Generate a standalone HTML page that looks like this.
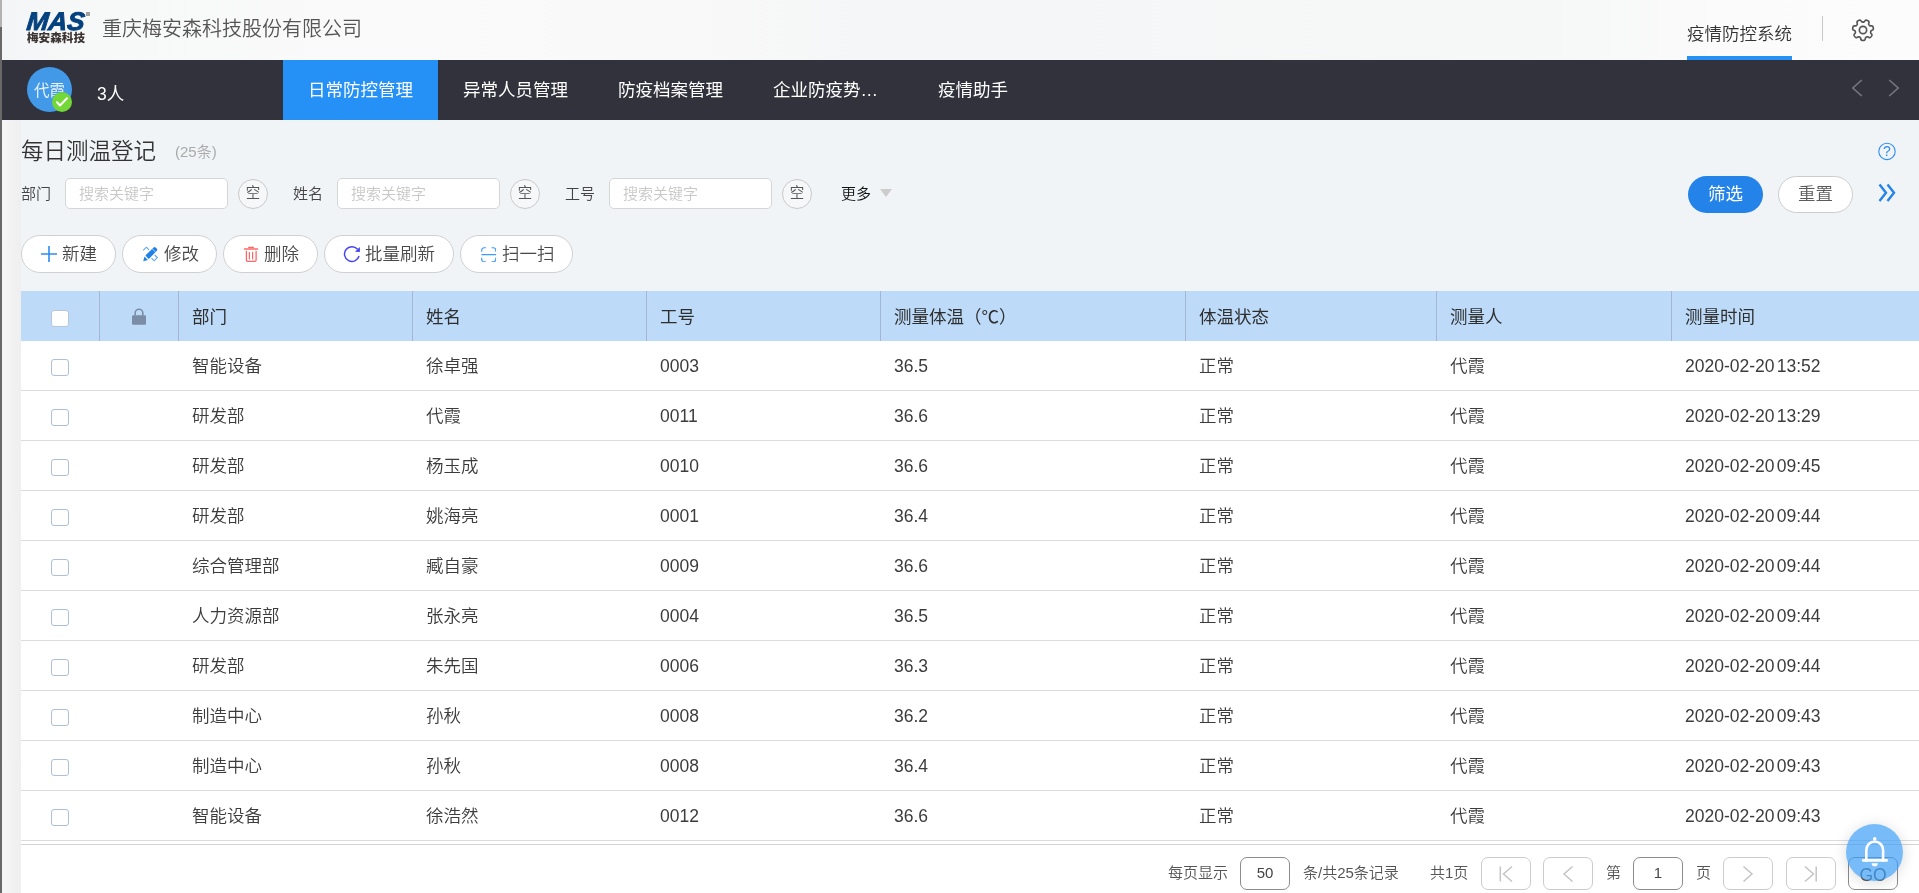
<!DOCTYPE html>
<html lang="zh-CN">
<head>
<meta charset="utf-8">
<title>每日测温登记</title>
<style>
*{box-sizing:border-box;margin:0;padding:0}
html,body{width:1919px;height:893px;overflow:hidden}
body{position:relative;background:#f0f4f7;font-family:"Liberation Sans","Noto Sans CJK SC",sans-serif;color:#444;font-size:17.5px}
#app{position:absolute;left:0;top:0;width:1919px;height:893px;will-change:transform;font-weight:350}
.abs{position:absolute}
.t{position:absolute;white-space:nowrap;line-height:1}
/* left window edge */
#edge1{left:0;top:0;width:2px;height:27px;background:#b2b2b2}
#edge2{left:0;top:27px;width:2px;height:866px;background:#686868}
#gutter{left:2px;top:120px;width:19px;height:773px;background:linear-gradient(90deg,#f5f5f5,#efeff0)}
/* header */
#hdr{left:2px;top:0;width:1917px;height:60px;background:linear-gradient(90deg,#f4f5f6 0,#f7f8f8 5%,#fafafa 20%,#f9f9f9 35%,#f5f6f7 45%,#f6f7f7 80%,#fbfbfb 90%,#fcfcfc 100%)}
#nav{left:2px;top:60px;width:1917px;height:60px;background:#32323c}
#tabA{left:283px;top:60px;width:155px;height:60px;background:#2590f5}
.tab{top:61px;height:60px;line-height:59px;color:#fff;font-size:17.5px;font-weight:400}
/* filter */
.lbl{font-size:15px;color:#444;top:186px}
.inp{top:178px;width:163px;height:31px;background:#fff;border:1px solid #d6d6d6;border-radius:5px}
.ph{font-size:15px;color:#c8c8c8;top:186px}
.kong{top:179px;width:30px;height:30px;border:1px solid #c8c8c8;border-radius:50%;background:#f6f7f8;text-align:center;line-height:27.5px;font-size:14.5px;color:#555}
/* buttons */
.btn{top:235px;height:38px;border:1px solid #d0d0d0;border-radius:19px;background:#fff}
.bt{top:246.3px;font-size:17.5px;color:#484848}
/* table */
#thead{left:21px;top:291px;width:1898px;height:50px;background:#bddbf9}
.vd{top:291px;width:1px;height:50px;background:#a3b6d6}
.th{top:309.3px;font-size:17.5px;color:#2e2e2e;font-weight:400}
#tbody{left:21px;top:341px;width:1898px;height:552px;background:#fff}
.row{position:absolute;left:21px;width:1898px;height:50px;border-bottom:1px solid #dcdcdc}
.row span{position:absolute;top:17px;line-height:1;white-space:nowrap;font-size:17.5px;color:#3c3c3c}
.cb{position:absolute;left:30px;top:18px;width:17.5px;height:17px;border:1px solid #aebfd8;border-radius:3px;background:#fff}
.c1{left:171px}.c2{left:405px}.c3{left:639px}.c4{left:873px}.c5{left:1178px}.c6{left:1429px}.c7{left:1664px;word-spacing:-2.6px}
/* pager */
.pg{font-size:15px;color:#555;top:865px}
.pb{top:857px;width:50px;height:33px;border:1px solid #ccc;border-radius:7px;background:#fff}
.pi{top:857px;width:50px;height:33px;border:1px solid #8c8c8c;border-radius:7px;background:#fff;text-align:center;line-height:30px;font-size:15px;color:#444}
</style>
</head>
<body>
<div id="app">
<div class="abs" id="hdr"></div>
<div class="abs" id="nav"></div>

<!-- logo -->
<svg class="abs" style="left:24px;top:6px" width="72" height="42" viewBox="0 0 72 42">
  <text x="4.500" y="24.4" transform="skewX(-6)" font-family="Liberation Sans, sans-serif" font-weight="bold" font-style="italic" font-size="25.5" fill="#04417f" stroke="#04417f" stroke-width="0.9" textLength="58" lengthAdjust="spacingAndGlyphs">MAS</text>
  <rect x="62" y="6" width="4" height="4" fill="#a0a0a0"/>
  <text x="3" y="36.3" font-family="Noto Sans CJK SC, sans-serif" font-weight="900" font-size="11.6" fill="#3c3333" textLength="58" lengthAdjust="spacingAndGlyphs">梅安森科技</text>
</svg>
<div class="t" style="left:102px;top:18.700px;font-size:20px;color:#555">重庆梅安森科技股份有限公司</div>
<div class="t" style="left:1687px;top:25.5px;font-size:17.5px;color:#333">疫情防控系统</div>
<div class="abs" style="left:1687px;top:56px;width:105px;height:4px;background:#2590f5"></div>
<div class="abs" style="left:1822px;top:16px;width:1px;height:25px;background:#c9c9c9"></div>
<svg class="abs" style="left:1851px;top:17.900px" width="24" height="24" viewBox="0 0 24 24" fill="none" stroke="#555" stroke-width="1.650" stroke-linejoin="round">
  <circle cx="12" cy="12" r="3.650"/>
  <path d="M21.57 12.00 L20.83 12.33 L20.28 12.62 L19.99 12.90 L19.85 13.18 L19.77 13.47 L19.70 13.76 L19.63 14.05 L19.59 14.34 L19.59 14.66 L19.72 15.03 L20.10 15.54 L20.62 16.15 L20.92 16.72 L20.94 17.16 L20.81 17.54 L20.62 17.88 L20.41 18.20 L20.17 18.52 L19.92 18.81 L19.65 19.10 L19.36 19.36 L19.02 19.57 L18.58 19.65 L17.97 19.48 L17.25 19.11 L16.67 18.86 L16.28 18.81 L15.97 18.88 L15.69 18.99 L15.43 19.11 L15.16 19.24 L14.90 19.39 L14.66 19.59 L14.45 19.93 L14.29 20.54 L14.13 21.33 L13.88 21.92 L13.54 22.21 L13.17 22.34 L12.78 22.41 L12.39 22.44 L12.00 22.45 L11.61 22.44 L11.22 22.41 L10.83 22.34 L10.46 22.21 L10.12 21.92 L9.87 21.33 L9.71 20.54 L9.55 19.93 L9.34 19.59 L9.10 19.39 L8.84 19.24 L8.57 19.11 L8.31 18.99 L8.03 18.88 L7.72 18.81 L7.33 18.86 L6.75 19.11 L6.03 19.48 L5.42 19.65 L4.98 19.57 L4.64 19.36 L4.35 19.10 L4.08 18.81 L3.83 18.52 L3.59 18.20 L3.38 17.88 L3.19 17.54 L3.06 17.16 L3.08 16.72 L3.38 16.15 L3.90 15.54 L4.28 15.03 L4.41 14.66 L4.41 14.34 L4.37 14.05 L4.30 13.76 L4.23 13.47 L4.15 13.18 L4.01 12.90 L3.72 12.62 L3.17 12.33 L2.43 12.00 L1.91 11.62 L1.70 11.23 L1.66 10.83 L1.68 10.44 L1.73 10.06 L1.81 9.67 L1.91 9.30 L2.03 8.92 L2.18 8.56 L2.39 8.23 L2.75 7.96 L3.38 7.85 L4.18 7.87 L4.81 7.85 L5.19 7.72 L5.44 7.53 L5.64 7.31 L5.83 7.08 L6.01 6.84 L6.18 6.60 L6.31 6.31 L6.36 5.92 L6.23 5.30 L6.03 4.52 L6.01 3.88 L6.18 3.47 L6.46 3.19 L6.78 2.96 L7.12 2.76 L7.47 2.58 L7.82 2.42 L8.19 2.28 L8.56 2.18 L8.96 2.13 L9.39 2.25 L9.87 2.67 L10.36 3.31 L10.76 3.79 L11.10 4.01 L11.41 4.08 L11.70 4.10 L12.00 4.11 L12.30 4.10 L12.59 4.08 L12.90 4.01 L13.24 3.79 L13.64 3.31 L14.13 2.67 L14.61 2.25 L15.04 2.13 L15.44 2.18 L15.81 2.28 L16.18 2.42 L16.53 2.58 L16.88 2.76 L17.22 2.96 L17.54 3.19 L17.82 3.47 L17.99 3.88 L17.97 4.52 L17.77 5.30 L17.64 5.92 L17.69 6.31 L17.82 6.60 L17.99 6.84 L18.17 7.08 L18.36 7.31 L18.56 7.53 L18.81 7.72 L19.19 7.85 L19.82 7.87 L20.62 7.85 L21.25 7.96 L21.61 8.23 L21.82 8.56 L21.97 8.92 L22.09 9.30 L22.19 9.67 L22.27 10.06 L22.32 10.44 L22.34 10.83 L22.30 11.23 L22.09 11.62Z"/>
</svg>
<!-- nav -->
<div class="abs" style="left:27px;top:67px;width:45px;height:45px;border-radius:50%;background:#4199e8"></div>
<div class="t" style="left:34px;top:83.2px;font-size:15.5px;color:#eaf3fc;font-weight:400">代霞</div>
<div class="abs" style="left:52px;top:92px;width:20px;height:20px;border-radius:50%;background:#72d737"></div>
<svg class="abs" style="left:52px;top:92px" width="20" height="20" viewBox="0 0 20 20" fill="none" stroke="#fff" stroke-width="2" stroke-linecap="round" stroke-linejoin="round"><path d="M5 10.3l3 3.2 7-7.2"/></svg>
<div class="t" style="left:97px;top:86px;font-size:17.5px;color:#fff;font-weight:400">3人</div>
<div class="abs" id="tabA"></div>
<div class="t tab" style="left:308px">日常防控管理</div>
<div class="t tab" style="left:463px">异常人员管理</div>
<div class="t tab" style="left:618px">防疫档案管理</div>
<div class="t tab" style="left:773px">企业防疫势…</div>
<div class="t tab" style="left:938px">疫情助手</div>
<svg class="abs" style="left:1848px;top:76px" width="56" height="24" viewBox="0 0 56 24" fill="none" stroke="#77777f" stroke-width="1.6"><path d="M13.800 4L4.800 12 13.800 20"/><path d="M41.200 4L50.200 12 41.200 20"/></svg>

<!-- title + filter -->
<div class="t" style="left:21px;top:141.300px;font-size:22.5px;color:#333">每日测温登记</div>
<div class="t" style="left:175px;top:144px;font-size:15px;color:#aaa">(25条)</div>
<svg class="abs" style="left:1877px;top:141px" width="20" height="20" viewBox="0 0 20 20"><circle cx="10" cy="10.4" r="8.2" fill="none" stroke="#2f8df0" stroke-width="1.1"/><text x="10" y="15.300" text-anchor="middle" font-family="Liberation Sans, sans-serif" font-size="14" fill="#2f8df0">?</text></svg>
<div class="t lbl" style="left:21px">部门</div>
<div class="abs inp" style="left:65px"></div><div class="t ph" style="left:79px">搜索关键字</div>
<div class="abs kong" style="left:238px">空</div>
<div class="t lbl" style="left:293px">姓名</div>
<div class="abs inp" style="left:337px"></div><div class="t ph" style="left:351px">搜索关键字</div>
<div class="abs kong" style="left:510px">空</div>
<div class="t lbl" style="left:565px">工号</div>
<div class="abs inp" style="left:609px"></div><div class="t ph" style="left:623px">搜索关键字</div>
<div class="abs kong" style="left:782px">空</div>
<div class="t lbl" style="left:841px;color:#111">更多</div>
<div class="abs" style="left:880px;top:189px;width:0;height:0;border-left:6.5px solid transparent;border-right:6.5px solid transparent;border-top:8.5px solid #ccc"></div>
<div class="abs" style="left:1688px;top:176px;width:75px;height:37px;border-radius:19px;background:#2383e8"></div>
<div class="t" style="left:1708px;top:186px;font-size:17.5px;color:#fff;font-weight:400">筛选</div>
<div class="abs" style="left:1778px;top:176px;width:75px;height:37px;border-radius:19px;background:#fff;border:1px solid #ccc"></div>
<div class="t" style="left:1798px;top:186px;font-size:17.5px;color:#5c5c5c">重置</div>
<svg class="abs" style="left:1876px;top:182px" width="22" height="22" viewBox="0 0 22 22" fill="none" stroke="#2383e8" stroke-width="2.400"><path d="M3.5 2.5l6.5 8.3-6.5 8.2"/><path d="M11.5 2.5l6.5 8.3-6.5 8.2"/></svg>
<!-- toolbar -->
<div class="abs btn" style="left:21px;width:95px"></div>
<svg class="abs" style="left:41px;top:246px" width="16" height="16" viewBox="0 0 16 16" stroke="#2e8bf0" stroke-width="1.6"><path d="M8 0v16M0 8h16"/></svg>
<div class="t bt" style="left:62px">新建</div>
<div class="abs btn" style="left:122px;width:95px"></div>
<svg class="abs" style="left:141px;top:245px" width="18" height="18" viewBox="0 0 18 18"><path d="M2.2 16.2l1.3-4.6 3.4 3.4z" fill="#1f80e8"/><path d="M4.4 10.6L12.6 2.4a1.4 1.4 0 0 1 2 0l1.3 1.3a1.4 1.4 0 0 1 0 2L7.8 13.900z" fill="#1f80e8"/><path d="M11 3.600l3.400 3.400" stroke="#cfe4fb" stroke-width=".8" fill="none"/><path d="M2.2 5.4L5.4 2.2 8 4.8M10.5 13.2l2.6 2.6 3.2-3.2-2.6-2.6" fill="none" stroke="#5aa6f5" stroke-width="1.1"/></svg>
<div class="t bt" style="left:164px">修改</div>
<div class="abs btn" style="left:223px;width:95px"></div>
<svg class="abs" style="left:243px;top:246px" width="16" height="17" viewBox="0 0 16 17" fill="none" stroke="#ff6666" stroke-linecap="round"><path d="M1.500 3.100H14.500" stroke-width="1.500"/><path d="M5.600 1.400H10.400" stroke-width="1.100"/><path d="M3.400 5.300V14a1.400 1.400 0 0 0 1.400 1.400H11.700a1.400 1.400 0 0 0 1.400-1.400V5.300" stroke-width="1.300"/><path d="M6.400 6.400V13M9.600 6.400V13" stroke-width="1.200"/></svg>
<div class="t bt" style="left:264px">删除</div>
<div class="abs btn" style="left:324px;width:130px"></div>
<svg class="abs" style="left:343px;top:245px" width="18" height="18" viewBox="0 0 18 18" fill="none" stroke="#4444f2" stroke-width="1.450"><path d="M16.050 11A7.400 7.400 0 1 1 14.570 4.340"/><path d="M16.900 1.900V6.900L12 6.700z" fill="#4444f2" stroke="none"/></svg>
<div class="t bt" style="left:365px">批量刷新</div>
<div class="abs btn" style="left:460px;width:113px"></div>
<svg class="abs" style="left:480.5px;top:246.700px" width="15.5" height="15.5" viewBox="0 0 17 17" fill="none" stroke="#3b9bff" stroke-width="1.300"><path d="M0.8 5.2V3.4A2.6 2.6 0 0 1 3.4 0.8h2M11.6 0.8h2a2.6 2.6 0 0 1 2.6 2.6v1.8M16.2 11.8v1.8a2.6 2.6 0 0 1-2.6 2.6h-2M5.4 16.2h-2a2.6 2.6 0 0 1-2.6-2.6v-1.8M0.5 8.4h16"/></svg>
<div class="t bt" style="left:502px">扫一扫</div>

<!-- table -->
<div class="abs" id="tbody"></div>
<div class="abs" id="thead"></div>
<div class="abs vd" style="left:99px"></div><div class="abs vd" style="left:178px"></div><div class="abs vd" style="left:412px"></div><div class="abs vd" style="left:646px"></div><div class="abs vd" style="left:880px"></div><div class="abs vd" style="left:1185px"></div><div class="abs vd" style="left:1436px"></div><div class="abs vd" style="left:1671px"></div>
<div class="abs" style="left:51px;top:309.5px;width:17.5px;height:17.5px;border:1px solid #b5c6dc;border-radius:3px;background:#fff"></div>
<svg class="abs" style="left:131px;top:308px" width="16" height="18" viewBox="0 0 16 18"><rect x="1" y="7.2" width="14" height="9.6" rx="1.2" fill="#7b8ca6"/><path d="M4.2 7.5V5a3.8 3.8 0 0 1 7.6 0v2.5" fill="none" stroke="#7b8ca6" stroke-width="1.6"/></svg>
<div class="t th" style="left:192px">部门</div><div class="t th" style="left:426px">姓名</div><div class="t th" style="left:660px">工号</div><div class="t th" style="left:894px">测量体温（℃）</div><div class="t th" style="left:1199px">体温状态</div><div class="t th" style="left:1450px">测量人</div><div class="t th" style="left:1685px">测量时间</div>
<div class="row" style="top:341px"><i class="cb"></i><span class="c1">智能设备</span><span class="c2">徐卓强</span><span class="c3">0003</span><span class="c4">36.5</span><span class="c5">正常</span><span class="c6">代霞</span><span class="c7">2020-02-20 13:52</span></div>
<div class="row" style="top:391px"><i class="cb"></i><span class="c1">研发部</span><span class="c2">代霞</span><span class="c3">0011</span><span class="c4">36.6</span><span class="c5">正常</span><span class="c6">代霞</span><span class="c7">2020-02-20 13:29</span></div>
<div class="row" style="top:441px"><i class="cb"></i><span class="c1">研发部</span><span class="c2">杨玉成</span><span class="c3">0010</span><span class="c4">36.6</span><span class="c5">正常</span><span class="c6">代霞</span><span class="c7">2020-02-20 09:45</span></div>
<div class="row" style="top:491px"><i class="cb"></i><span class="c1">研发部</span><span class="c2">姚海亮</span><span class="c3">0001</span><span class="c4">36.4</span><span class="c5">正常</span><span class="c6">代霞</span><span class="c7">2020-02-20 09:44</span></div>
<div class="row" style="top:541px"><i class="cb"></i><span class="c1">综合管理部</span><span class="c2">臧自豪</span><span class="c3">0009</span><span class="c4">36.6</span><span class="c5">正常</span><span class="c6">代霞</span><span class="c7">2020-02-20 09:44</span></div>
<div class="row" style="top:591px"><i class="cb"></i><span class="c1">人力资源部</span><span class="c2">张永亮</span><span class="c3">0004</span><span class="c4">36.5</span><span class="c5">正常</span><span class="c6">代霞</span><span class="c7">2020-02-20 09:44</span></div>
<div class="row" style="top:641px"><i class="cb"></i><span class="c1">研发部</span><span class="c2">朱先国</span><span class="c3">0006</span><span class="c4">36.3</span><span class="c5">正常</span><span class="c6">代霞</span><span class="c7">2020-02-20 09:44</span></div>
<div class="row" style="top:691px"><i class="cb"></i><span class="c1">制造中心</span><span class="c2">孙秋</span><span class="c3">0008</span><span class="c4">36.2</span><span class="c5">正常</span><span class="c6">代霞</span><span class="c7">2020-02-20 09:43</span></div>
<div class="row" style="top:741px"><i class="cb"></i><span class="c1">制造中心</span><span class="c2">孙秋</span><span class="c3">0008</span><span class="c4">36.4</span><span class="c5">正常</span><span class="c6">代霞</span><span class="c7">2020-02-20 09:43</span></div>
<div class="row" style="top:791px"><i class="cb"></i><span class="c1">智能设备</span><span class="c2">徐浩然</span><span class="c3">0012</span><span class="c4">36.6</span><span class="c5">正常</span><span class="c6">代霞</span><span class="c7">2020-02-20 09:43</span></div>
<div class="abs" style="left:21px;top:844px;width:1898px;height:1px;background:#d4d4d4"></div>
<!-- pager -->
<div class="t pg" style="left:1168px">每页显示</div>
<div class="abs pi" style="left:1240px">50</div>
<div class="t pg" style="left:1303px">条/共25条记录</div>
<div class="t pg" style="left:1430px">共1页</div>
<div class="abs pb" style="left:1481px"></div>
<div class="abs pb" style="left:1543px"></div>
<div class="t pg" style="left:1606px">第</div>
<div class="abs pi" style="left:1633px">1</div>
<div class="t pg" style="left:1696px">页</div>
<div class="abs pb" style="left:1723px"></div>
<div class="abs pb" style="left:1786px"></div>
<div class="abs pi" style="left:1848px;font-size:17.5px;color:#555;line-height:34px">GO</div>
<svg class="abs" style="left:1481px;top:857px" width="355" height="33" viewBox="0 0 355 33" fill="none" stroke="#c4c4c4" stroke-width="1.5">
<path d="M19.3 9.5v15M31 9.5l-8.5 7.5 8.5 7.5"/>
<path d="M91.5 9.5l-8.5 7.5 8.5 7.5"/>
<path d="M262.5 9.5l8.500 7.5-8.5 7.5"/>
<path d="M324 9.500l8.500 7.5-8.5 7.5M335.200 9.5v15"/>
</svg>
<div class="abs" style="left:1846px;top:824px;width:57px;height:57px;border-radius:50%;background:rgba(60,156,247,.69);box-shadow:0 2px 14px rgba(0,0,0,.15)"></div>
<svg class="abs" style="left:1846px;top:824px" width="57" height="57" viewBox="0 0 57 57" fill="none" stroke="#fff" stroke-width="2.600" stroke-linecap="round" stroke-linejoin="round"><circle cx="28.700" cy="14.800" r="1.800" fill="#fff" stroke="none"/><path d="M20.300 36.400V25.900a8.400 8.400 0 0 1 16.800 0V36.400"/><path d="M17.200 36.400H40.800"/><path d="M25.600 39.200a3.100 3.100 0 0 0 6.200 0z" fill="#fff" stroke="none"/></svg>
<div class="abs" id="gutter"></div>
<div class="abs" id="edge1"></div>
<div class="abs" id="edge2"></div>
</div>
</body>
</html>
